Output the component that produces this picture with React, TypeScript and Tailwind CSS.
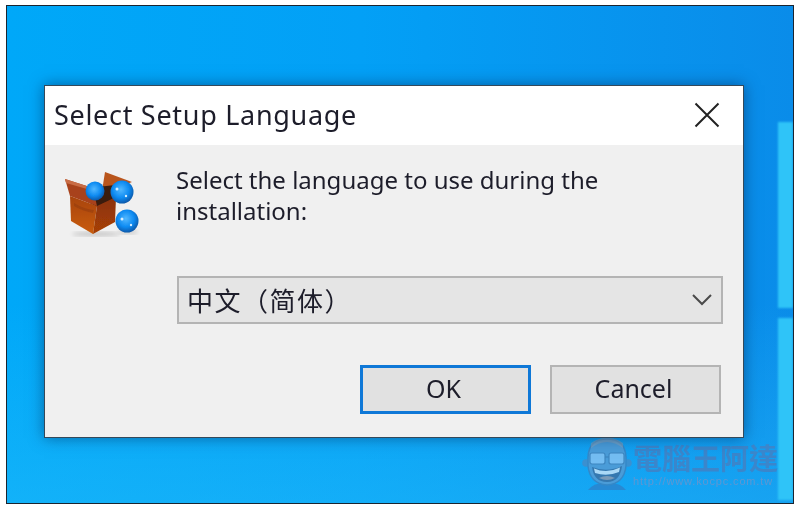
function BoxIcon() {
  return (
    <svg width="84" height="80" viewBox="0 0 84 80" className="block">
      <defs>
        <radialGradient id="ball" cx="0.45" cy="0.4" r="0.65">
          <stop offset="0" stopColor="#52b8ff" />
          <stop offset="0.55" stopColor="#0e8bf2" />
          <stop offset="1" stopColor="#0a4f9c" />
        </radialGradient>
        <linearGradient id="front" x1="0" y1="0" x2="0" y2="1">
          <stop offset="0" stopColor="#a84410" />
          <stop offset="1" stopColor="#c95c08" />
        </linearGradient>
        <linearGradient id="side" x1="0" y1="0" x2="0" y2="1">
          <stop offset="0" stopColor="#8a3208" />
          <stop offset="1" stopColor="#a83f06" />
        </linearGradient>
        <filter id="soft"><feGaussianBlur stdDeviation="2" /></filter>
        <filter id="s2"><feGaussianBlur stdDeviation="0.5" /></filter>
      </defs>
      <ellipse cx="36" cy="69" rx="24" ry="2.5" fill="#000" opacity="0.16" filter="url(#soft)" />
      <ellipse cx="68" cy="67" rx="10" ry="2" fill="#000" opacity="0.16" filter="url(#soft)" />
      <g filter="url(#s2)">
        <path d="M45 7 L72 17 L62 21 L60 30 L42 26 Z" fill="#b9551f" />
        <path d="M20 24 L55 20 L55 38 L37 42 L14 30 Z" fill="#3a1c0c" />
        <path d="M10 31 L37 41 L33 69 L11 56 Z" fill="url(#front)" />
        <path d="M37 41 L56 32 L55 57 L33 69 Z" fill="url(#side)" />
        <path d="M5 14 L33 23 L37 41 L10 31 Z" fill="#a8431a" />
        <path d="M5 14 L33 23 L34 26 L6 18 Z" fill="#c96c45" />
        <path d="M14 38 Q24 44 34 45 L33 48 Q22 46 14 41 Z" fill="#8f3a0c" opacity="0.5" />
        <circle cx="35" cy="26" r="9.5" fill="url(#ball)" />
        <circle cx="62" cy="27" r="11.5" fill="url(#ball)" />
        <circle cx="67" cy="56" r="11.5" fill="url(#ball)" />
        <circle cx="57" cy="24" r="1.5" fill="#d6eeff" />
        <circle cx="66" cy="31" r="1.2" fill="#d6eeff" />
        <circle cx="62" cy="54" r="1.5" fill="#d6eeff" />
        <circle cx="71" cy="60" r="1.2" fill="#d6eeff" />
      </g>
    </svg>
  );
}

function Face() {
  return (
    <svg width="50" height="56" viewBox="0 0 50 56" className="block">
      <path d="M6 55 Q12 47 25 48 Q38 47 44 55 Z" fill="#2a84cc" opacity="0.85" />
      <circle cx="4" cy="28" r="3.8" fill="#3b90d0" />
      <circle cx="46" cy="28" r="3.8" fill="#3b90d0" />
      <path d="M6 22 Q7 4 25 4 Q43 4 44 22 L44 31 Q42 49 25 50 Q8 49 6 31 Z" fill="#4a9cd8" stroke="#3488c8" strokeWidth="1.5" />
      <path d="M9 13 Q25 1 41 13 L41 8 Q25 -3 9 8 Z" fill="#8ca4b8" opacity="0.5" />
      <rect x="8" y="18" width="15" height="11" rx="2" fill="#74bdf2" stroke="#3d86c0" strokeWidth="1.2" />
      <rect x="27" y="18" width="15" height="11" rx="2" fill="#74bdf2" stroke="#3d86c0" strokeWidth="1.2" />
      <path d="M23 22 H27" stroke="#3d86c0" strokeWidth="1.2" />
      <path d="M10 32 Q25 38 40 31 Q38 47 25 47 Q12 47 10 32 Z" fill="#3478b0" />
      <path d="M12 33.5 Q25 39 38 32.5 L37 37 Q25 42 13 38 Z" fill="#a9d8f6" />
      <path d="M17 43 Q25 39 33 43 Q25 47 17 43 Z" fill="#7a9bb8" />
    </svg>
  );
}

export default function App() {
  return (
    <div
      className="w-[800px] h-[510px] bg-white pl-[6px] pt-[5px] overflow-hidden"
      style={{ fontFamily: '"Noto Sans", "Noto Sans CJK TC", sans-serif' }}
    >
      <div className="relative w-[788px] h-[499px] border border-[#1b2530] overflow-hidden bg-[linear-gradient(90deg,#00a8f8_0%,#03a0f6_45%,#0a8ce9_100%)]">
        <div className="absolute inset-0 bg-[linear-gradient(180deg,rgba(0,120,225,0)_0%,rgba(0,110,215,0)_60%,rgba(40,190,250,0.45)_100%)]" />
        <div className="absolute left-[771px] top-[116px] w-[15px] h-[186px] bg-[#2fc4f8] blur-[1px]" />
        <div className="absolute left-[771px] top-[312px] w-[15px] h-[182px] bg-[#2fc4f8] blur-[1px]" />

        <div className="absolute left-[575px] top-[429px] flex items-center gap-[1px] blur-[0.5px]">
          <Face />
          <div className="flex flex-col items-start pt-[4px]">
            <span className="text-[29px] leading-[32px] font-bold text-[#3b86cb] whitespace-nowrap">電腦王阿達</span>
            <span className="text-[11px] leading-[12px] font-medium text-[#5f97d2] tracking-[0.85px] whitespace-nowrap" style={{ fontFamily: '"Liberation Sans", sans-serif' }}>http://www.kocpc.com.tw</span>
          </div>
        </div>

        <div className="absolute left-[37px] top-[79px] w-[700px] h-[353px] flex flex-col border border-[#34495a] bg-[#f0f0f0] shadow-[0_0_14px_rgba(0,40,90,0.55)]">
          <div className="h-[59px] shrink-0 bg-white flex items-center justify-between pl-[9px] pr-[22px] pb-[3px] blur-[0.5px]">
            <span className="text-[27px] leading-none text-[#1d1d2a] tracking-[0.7px] whitespace-nowrap">Select Setup Language</span>
            <svg width="28" height="28" viewBox="0 0 28 28" className="mt-[2px]">
              <path d="M2.5 2.5 L25.5 25.5 M25.5 2.5 L2.5 25.5" stroke="#222" strokeWidth="2" />
            </svg>
          </div>
          <div className="flex-1 flex flex-col blur-[0.5px]">
            <div className="flex h-[131px] shrink-0">
              <div className="w-[131px] shrink-0 pl-[15px] pt-[20px]">
                <BoxIcon />
              </div>
              <p className="pt-[19px] text-[24px] leading-[31px] text-[#1d1d2a] w-[480px]">
                Select the language to use during the installation:
              </p>
            </div>
            <div className="pl-[132px] pr-[20px]">
              <div className="h-[48px] border-2 border-[#b4b4b4] bg-[#e5e5e5] flex items-center justify-between pl-[8px] pr-[8px]">
                <span className="text-[26px] leading-none tracking-[1.5px] text-[#1d1d2a] whitespace-nowrap" style={{ fontFamily: '"Noto Sans CJK SC", sans-serif' }}>中文（简体）</span>
                <svg width="22" height="14" viewBox="0 0 22 14">
                  <path d="M2 2 L11 11 L20 2" fill="none" stroke="#4a4a4a" strokeWidth="2" />
                </svg>
              </div>
            </div>
            <div className="flex justify-end gap-[19px] pl-[130px] pr-[22px] pt-[41px]">
              <button className="w-[171px] h-[49px] pb-[2px] pr-[4px] border-[3px] border-[#0f78d7] bg-[#e1e1e1] text-[25px] leading-none text-[#1d1d2a]">OK</button>
              <button className="w-[171px] h-[49px] pb-[2px] pr-[4px] border-2 border-[#b4b4b4] bg-[#e1e1e1] text-[25px] leading-none text-[#1d1d2a]">Cancel</button>
            </div>
          </div>
        </div>
      </div>
    </div>
  );
}
